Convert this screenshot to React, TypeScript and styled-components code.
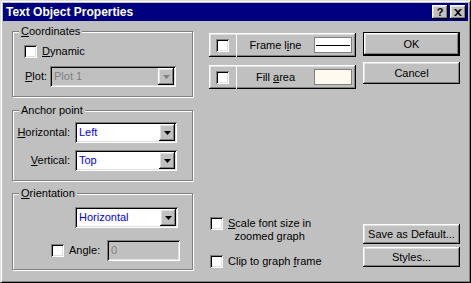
import React from 'react'
import styled, { createGlobalStyle } from 'styled-components'

const GlobalStyle = createGlobalStyle`
  html, body {
    margin: 0;
    padding: 0;
    background: #c0c0c0;
  }
  body {
    font-family: "Liberation Sans", Arial, sans-serif;
    font-size: 11px;
    color: #000;
  }
`

const raised = `
  box-shadow: inset -1px -1px #000, inset 1px 1px #fff, inset -2px -2px #808080, inset 2px 2px #dfdfdf;
`

const sunken = `
  box-shadow: inset 1px 1px #808080, inset -1px -1px #fff, inset 2px 2px #000, inset -2px -2px #dfdfdf;
`

const Window = styled.div`
  box-sizing: border-box;
  width: 471px;
  height: 283px;
  padding: 2px;
  background: #c0c0c0;
  border-top: 1px solid #dfdfdf;
  border-left: 1px solid #dfdfdf;
  border-right: 1px solid #000;
  border-bottom: 1px solid #000;
  box-shadow: inset 1px 1px #fff, inset -1px -1px #808080;
  display: flex;
  flex-direction: column;
`

const TitleBar = styled.div`
  height: 18px;
  flex: none;
  background: #000080;
  display: flex;
  align-items: center;
  padding: 0 2px 0 3px;
`

const Title = styled.div`
  flex: 1;
  color: #fff;
  font-weight: bold;
  font-size: 12px;
  line-height: 14px;
`

const CaptionButton = styled.div`
  box-sizing: border-box;
  width: 16px;
  height: 14px;
  background: #c0c0c0;
  ${raised}
  display: flex;
  align-items: center;
  justify-content: center;
  font-weight: bold;
  font-size: 11px;
  line-height: 11px;
  & + & {
    margin-left: 2px;
  }
`

const Body = styled.div`
  flex: 1;
  display: flex;
  padding: 4px 0 0 9px;
`

const LeftColumn = styled.div`
  width: 182px;
  display: flex;
  flex-direction: column;
`

const MiddleColumn = styled.div`
  width: 147px;
  margin-left: 15px;
  display: flex;
  flex-direction: column;
`

const RightColumn = styled.div`
  width: 97px;
  margin-left: 7px;
  display: flex;
  flex-direction: column;
`

const Group = styled.fieldset<{ $top?: number }>`
  box-sizing: border-box;
  width: 181px;
  margin: ${p => p.$top ?? 0}px 0 0 0;
  padding: 0;
  border: 1px solid #808080;
  box-shadow: inset 1px 1px #fff, 1px 1px #fff;
  min-inline-size: 0;
`

const Legend = styled.legend`
  margin-left: 6px;
  padding: 0 2px;
  line-height: 13px;
  background: #c0c0c0;
`

const U = styled.span`
  text-decoration: underline;
  text-underline-offset: 1px;
`

const Check = styled.span`
  box-sizing: border-box;
  display: inline-block;
  flex: none;
  width: 13px;
  height: 13px;
  background: #fff;
  ${sunken}
`

const CheckRow = styled.div<{ $top: number; $left: number; $wrap?: boolean }>`
  display: flex;
  align-items: ${p => (p.$wrap ? 'flex-start' : 'center')};
  margin: ${p => p.$top}px 0 0 ${p => p.$left}px;
  line-height: 13px;
`

const CheckLabel = styled.span`
  margin-left: 5px;
`

const FieldRow = styled.div<{ $top: number; $label: number }>`
  display: grid;
  grid-template-columns: ${p => p.$label}px auto;
  align-items: center;
  margin-top: ${p => p.$top}px;
  line-height: 13px;
`

const FieldLabel = styled.span<{ $right?: boolean }>`
  text-align: ${p => (p.$right ? 'right' : 'left')};
  padding: ${p => (p.$right ? '0 5px 0 0' : '0 0 0 12px')};
`

const Combo = styled.div<{ $w: number; $disabled?: boolean }>`
  box-sizing: border-box;
  width: ${p => p.$w}px;
  height: 21px;
  padding: 2px;
  background: ${p => (p.$disabled ? '#c0c0c0' : '#fff')};
  ${sunken}
  display: flex;
  align-items: center;
`

const ComboText = styled.span<{ $disabled?: boolean }>`
  flex: 1;
  padding-left: 2px;
  color: ${p => (p.$disabled ? '#808080' : '#0000ff')};
`

const DropButton = styled.span`
  box-sizing: border-box;
  width: 16px;
  height: 17px;
  background: #c0c0c0;
  ${raised}
  display: flex;
  align-items: center;
  justify-content: center;
`

const Bottom = styled.div<{ $h: number }>`
  height: ${p => p.$h}px;
`

const EditBox = styled.div`
  box-sizing: border-box;
  width: 73px;
  height: 21px;
  padding: 0 4px;
  background: #c0c0c0;
  color: #808080;
  ${sunken}
  display: flex;
  align-items: center;
`

const AngleRow = styled.div`
  display: flex;
  align-items: center;
  margin: 12px 0 0 38px;
  line-height: 13px;
`

const AngleLabel = styled.span`
  width: 38px;
  margin-left: 5px;
`

const Bar = styled.div<{ $top: number }>`
  box-sizing: border-box;
  height: 24px;
  margin-top: ${p => p.$top}px;
  display: flex;
  background: #c0c0c0;
  ${raised}
`

const BarCheckCell = styled.div`
  width: 27px;
  display: flex;
  align-items: center;
  justify-content: center;
  box-shadow: inset -1px 0 #fff;
  padding-right: 1px;
`

const BarLabel = styled.div`
  flex: 1;
  text-align: center;
  line-height: 24px;
`

const Swatch = styled.div<{ $fill: string }>`
  box-sizing: border-box;
  width: 38px;
  height: 16px;
  margin: 4px 4px 0 0;
  background: ${p => p.$fill};
  border: 1px solid #808080;
  display: flex;
  align-items: center;
`

const SwatchLine = styled.div`
  flex: 1;
  height: 1px;
  margin: 0 1px;
  background: #000;
`

const ScaleText = styled.span`
  margin-left: 5px;
  text-align: center;
`

const Button = styled.button<{ $h: number; $top: number; $default?: boolean }>`
  box-sizing: border-box;
  width: 97px;
  height: ${p => p.$h}px;
  margin-top: ${p => p.$top}px;
  padding: 0;
  border: none;
  background: #c0c0c0;
  font-family: "Liberation Sans", Arial, sans-serif;
  font-size: 11px;
  color: #000;
  box-shadow: ${p =>
    p.$default
      ? 'inset 0 0 0 1px #000, inset -2px -2px #000, inset 2px 2px #fff, inset -3px -3px #808080, inset 3px 3px #dfdfdf'
      : 'inset -1px -1px #000, inset 1px 1px #fff, inset -2px -2px #808080, inset 2px 2px #dfdfdf'};
`

const Arrow = ({ color = '#000' }: { color?: string }) => (
  <svg width="7" height="4" viewBox="0 0 7 4">
    <path d="M0 0h7L3.5 4z" fill={color} />
  </svg>
)

const ComboBox = ({ value, width, disabled }: { value: string; width: number; disabled?: boolean }) => (
  <Combo $w={width} $disabled={disabled}>
    <ComboText $disabled={disabled}>{value}</ComboText>
    <DropButton>
      <Arrow color={disabled ? '#808080' : '#000'} />
    </DropButton>
  </Combo>
)

export default function App() {
  return (
    <>
      <GlobalStyle />
      <Window>
        <TitleBar>
          <Title>Text Object Properties</Title>
          <CaptionButton>?</CaptionButton>
          <CaptionButton>
            <svg width="8" height="7" viewBox="0 0 8 7">
              <path d="M0 0h2l2 2 2-2h2L5 3.5 8 7H6L4 5 2 7H0l3-3.5z" fill="#000" />
            </svg>
          </CaptionButton>
        </TitleBar>
        <Body>
          <LeftColumn>
            <Group>
              <Legend>
                <U>C</U>oordinates
              </Legend>
              <CheckRow $top={7} $left={11}>
                <Check />
                <CheckLabel>
                  <U>D</U>ynamic
                </CheckLabel>
              </CheckRow>
              <FieldRow $top={8} $label={37}>
                <FieldLabel>
                  <U>P</U>lot:
                </FieldLabel>
                <ComboBox value="Plot 1" width={126} disabled />
              </FieldRow>
              <Bottom $h={9} />
            </Group>

            <Group $top={7}>
              <Legend>Anchor point</Legend>
              <FieldRow $top={5} $label={62}>
                <FieldLabel $right>
                  <U>H</U>orizontal:
                </FieldLabel>
                <ComboBox value="Left" width={102} />
              </FieldRow>
              <FieldRow $top={7} $label={62}>
                <FieldLabel $right>
                  <U>V</U>ertical:
                </FieldLabel>
                <ComboBox value="Top" width={102} />
              </FieldRow>
              <Bottom $h={9} />
            </Group>

            <Group $top={6}>
              <Legend>
                <U>O</U>rientation
              </Legend>
              <FieldRow $top={7} $label={62}>
                <span />
                <ComboBox value="Horizontal" width={103} />
              </FieldRow>
              <AngleRow>
                <Check />
                <AngleLabel>Angle:</AngleLabel>
                <EditBox>0</EditBox>
              </AngleRow>
              <Bottom $h={8} />
            </Group>
          </LeftColumn>

          <MiddleColumn>
            <Bar $top={8}>
              <BarCheckCell>
                <Check />
              </BarCheckCell>
              <BarLabel>
                Frame l<U>i</U>ne
              </BarLabel>
              <Swatch $fill="#fff">
                <SwatchLine />
              </Swatch>
            </Bar>
            <Bar $top={8}>
              <BarCheckCell>
                <Check />
              </BarCheckCell>
              <BarLabel>
                Fill <U>a</U>rea
              </BarLabel>
              <Swatch $fill="#fffaf0" />
            </Bar>
            <CheckRow $top={128} $left={1} $wrap>
              <Check />
              <ScaleText>
                <U>S</U>cale font size in
                <br />
                zoomed graph
              </ScaleText>
            </CheckRow>
            <CheckRow $top={12} $left={1}>
              <Check />
              <CheckLabel>
                Clip to graph <U>f</U>rame
              </CheckLabel>
            </CheckRow>
          </MiddleColumn>

          <RightColumn>
            <Button $default $h={24} $top={7}>
              OK
            </Button>
            <Button $h={22} $top={6}>
              Cancel
            </Button>
            <Button $h={20} $top={140}>
              Save as Default...
            </Button>
            <Button $h={20} $top={3}>
              Styles...
            </Button>
          </RightColumn>
        </Body>
      </Window>
    </>
  )
}
